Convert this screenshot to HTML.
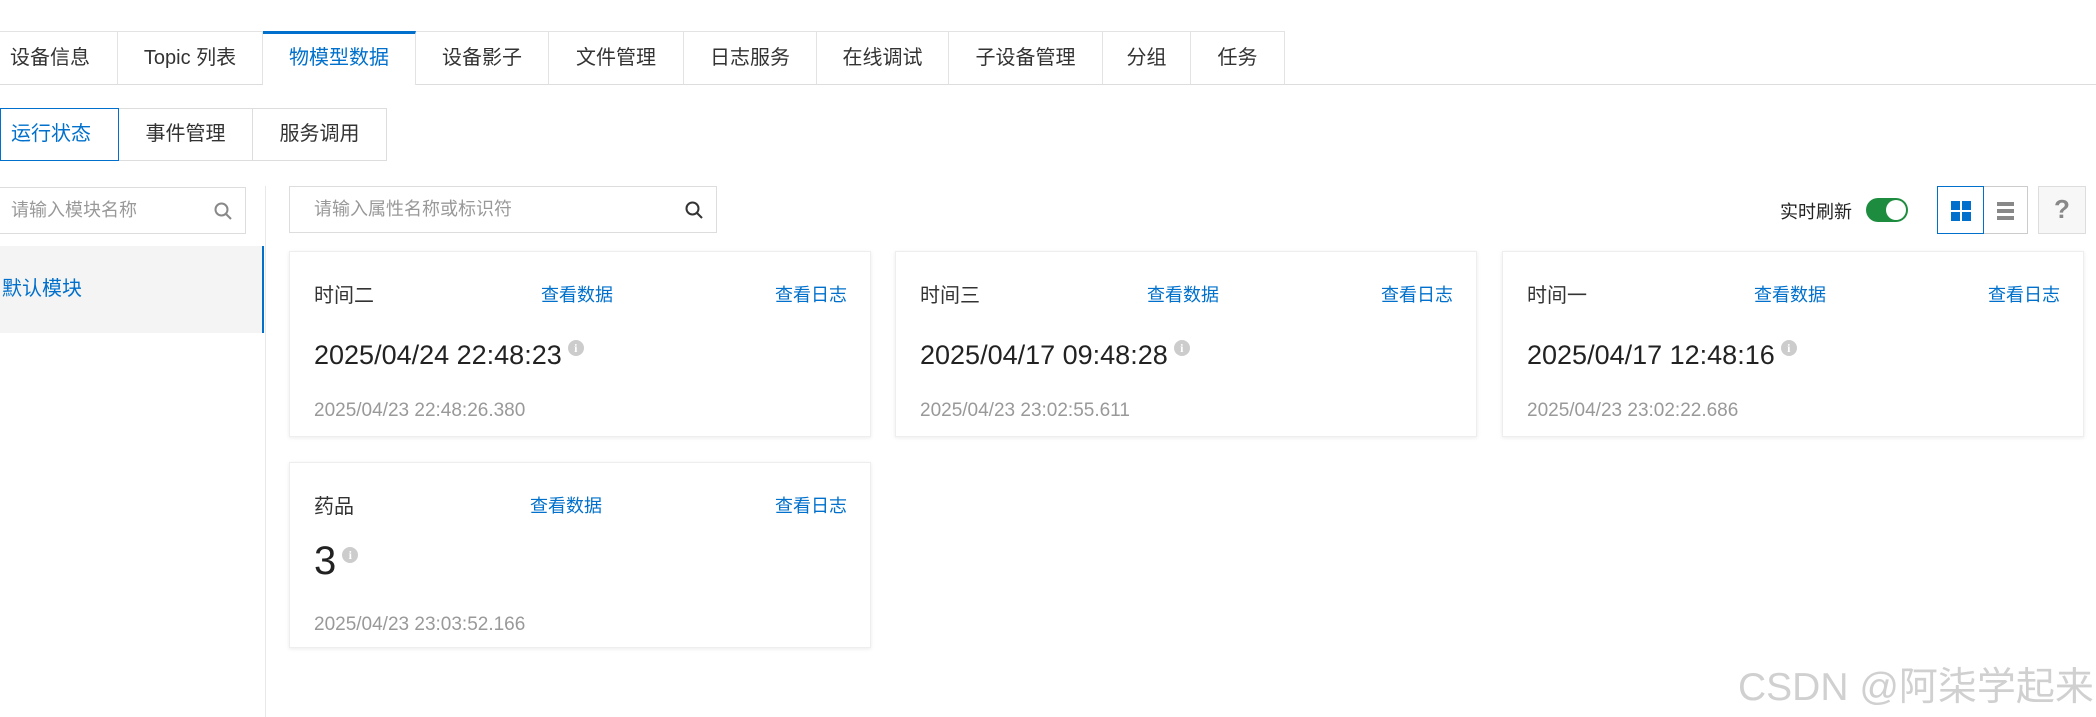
<!DOCTYPE html>
<html><head><meta charset="utf-8"><style>
*{box-sizing:border-box;margin:0;padding:0}
body{width:2096px;height:717px;background:#fff;font-family:"Liberation Sans","Noto Sans CJK SC",sans-serif;color:#333;position:relative;overflow:hidden}
.a{position:absolute}
.tabs{position:absolute;left:0;top:31px;height:54px;width:2096px;border-bottom:1px solid #ddd}
.tab{position:absolute;top:0;height:53px;border-top:1px solid #e3e3e3;border-right:1px solid #e3e3e3;font-size:20px;line-height:52px;text-align:center;color:#333}
.tab.on{border-top:3px solid #0070cc;color:#0070cc;background:#fff;height:54px;line-height:48px}
.sub{position:absolute;top:108px;height:53px;border:1px solid #ddd;font-size:20px;line-height:51px;text-align:center}
.card{position:absolute;background:#fff;border:1px solid #eee;box-shadow:0 1px 4px rgba(0,0,0,.08)}
.t{position:absolute;left:24px;top:27px;font-size:20px;color:#333}
.l1{position:absolute;top:29px;font-size:18px;color:#0070cc}
.v{position:absolute;left:24px;top:88px;font-size:27px;color:#222}
.ts{position:absolute;left:24px;top:148px;font-size:19px;color:#999}
.i{display:inline-block;width:16px;height:16px;border-radius:50%;background:#ccc;color:#fff;font-size:12px;line-height:16px;text-align:center;font-weight:bold;vertical-align:top;margin-left:6px;font-family:"Liberation Serif",serif}
</style></head><body>
<div class="tabs">
<div class="tab" style="left:0;width:118px;text-align:left;padding-left:10px">设备信息</div>
<div class="tab" style="left:118px;width:145px">Topic 列表</div>
<div class="tab on" style="left:263px;width:153px">物模型数据</div>
<div class="tab" style="left:416px;width:133px">设备影子</div>
<div class="tab" style="left:549px;width:135px">文件管理</div>
<div class="tab" style="left:684px;width:133px">日志服务</div>
<div class="tab" style="left:817px;width:132px">在线调试</div>
<div class="tab" style="left:949px;width:154px">子设备管理</div>
<div class="tab" style="left:1103px;width:88px">分组</div>
<div class="tab" style="left:1191px;width:94px">任务</div>
</div>
<div class="sub" style="left:0;width:119px;border-color:#0070cc;color:#0070cc;text-align:left;padding-left:10px">运行状态</div>
<div class="sub" style="left:119px;width:134px;border-left:none">事件管理</div>
<div class="sub" style="left:253px;width:134px;border-left:none">服务调用</div>

<div class="a" style="left:-2px;top:187px;width:248px;height:47px;border:1px solid #ddd;font-size:18px;color:#999;line-height:45px;padding-left:12px">请输入模块名称
<svg class="a" style="right:12px;top:13px" width="20" height="20" viewBox="0 0 20 20"><circle cx="8.5" cy="8.5" r="6" fill="none" stroke="#888" stroke-width="2"/><path d="M13 13l5 5" stroke="#888" stroke-width="2"/></svg></div>
<div class="a" style="left:265px;top:186px;width:1px;height:531px;background:#e8e8e8"></div>
<div class="a" style="left:0;top:246px;width:264px;height:87px;background:#f4f4f4;border-right:2px solid #0070cc;font-size:20px;color:#0070cc;line-height:87px;padding-left:2px">默认模块</div>

<div class="a" style="left:289px;top:186px;width:428px;height:47px;border:1px solid #ddd;font-size:18px;color:#999;line-height:45px;padding-left:24px">请输入属性名称或标识符
<svg class="a" style="right:12px;top:13px" width="20" height="20" viewBox="0 0 20 20"><circle cx="8.5" cy="8.5" r="6" fill="none" stroke="#333" stroke-width="2"/><path d="M13 13l5 5" stroke="#333" stroke-width="2"/></svg></div>

<div class="a" style="left:1780px;top:198px;font-size:18px;color:#222">实时刷新</div>
<div class="a" style="left:1866px;top:198px;width:42px;height:24px;border-radius:12px;background:#1e8c3e"><div class="a" style="right:2px;top:2px;width:20px;height:20px;border-radius:50%;background:#fff"></div></div>
<div class="a" style="left:1937px;top:186px;width:47px;height:48px;border:1px solid #0070cc"><div class="a" style="left:13px;top:14px;width:9px;height:9px;background:#0070cc"></div><div class="a" style="left:24px;top:14px;width:9px;height:9px;background:#0070cc"></div><div class="a" style="left:13px;top:25px;width:9px;height:9px;background:#0070cc"></div><div class="a" style="left:24px;top:25px;width:9px;height:9px;background:#0070cc"></div></div>
<div class="a" style="left:1984px;top:186px;width:44px;height:48px;border:1px solid #ccc;border-left:none"><div class="a" style="left:13px;top:15px;width:17px;height:4px;background:#888"></div><div class="a" style="left:13px;top:22px;width:17px;height:4px;background:#888"></div><div class="a" style="left:13px;top:29px;width:17px;height:4px;background:#888"></div></div>
<div class="a" style="left:2038px;top:186px;width:48px;height:48px;border:1px solid #ddd;background:#f7f7f7;font-size:26px;font-weight:bold;color:#888;text-align:center;line-height:44px">?</div>

<div class="card" style="left:289px;top:251px;width:582px;height:186px"><div class="t">时间二</div><div class="l1" style="left:251px">查看数据</div><div class="l1" style="left:485px">查看日志</div><div class="v">2025/04/24 22:48:23<span class="i">i</span></div><div class="ts">2025/04/23 22:48:26.380</div></div>
<div class="card" style="left:895px;top:251px;width:582px;height:186px"><div class="t">时间三</div><div class="l1" style="left:251px">查看数据</div><div class="l1" style="left:485px">查看日志</div><div class="v">2025/04/17 09:48:28<span class="i">i</span></div><div class="ts">2025/04/23 23:02:55.611</div></div>
<div class="card" style="left:1502px;top:251px;width:582px;height:186px"><div class="t">时间一</div><div class="l1" style="left:251px">查看数据</div><div class="l1" style="left:485px">查看日志</div><div class="v">2025/04/17 12:48:16<span class="i">i</span></div><div class="ts">2025/04/23 23:02:22.686</div></div>
<div class="card" style="left:289px;top:462px;width:582px;height:186px"><div class="t">药品</div><div class="l1" style="left:240px">查看数据</div><div class="l1" style="left:485px">查看日志</div><div class="v" style="top:76px;font-size:40px">3<span class="i" style="margin-top:8px">i</span></div><div class="ts" style="top:151px">2025/04/23 23:03:52.166</div></div>

<div class="a" style="left:1738px;top:656px;font-size:39px;color:rgba(150,150,150,.45)">CSDN @阿柒学起来</div>
</body></html>
